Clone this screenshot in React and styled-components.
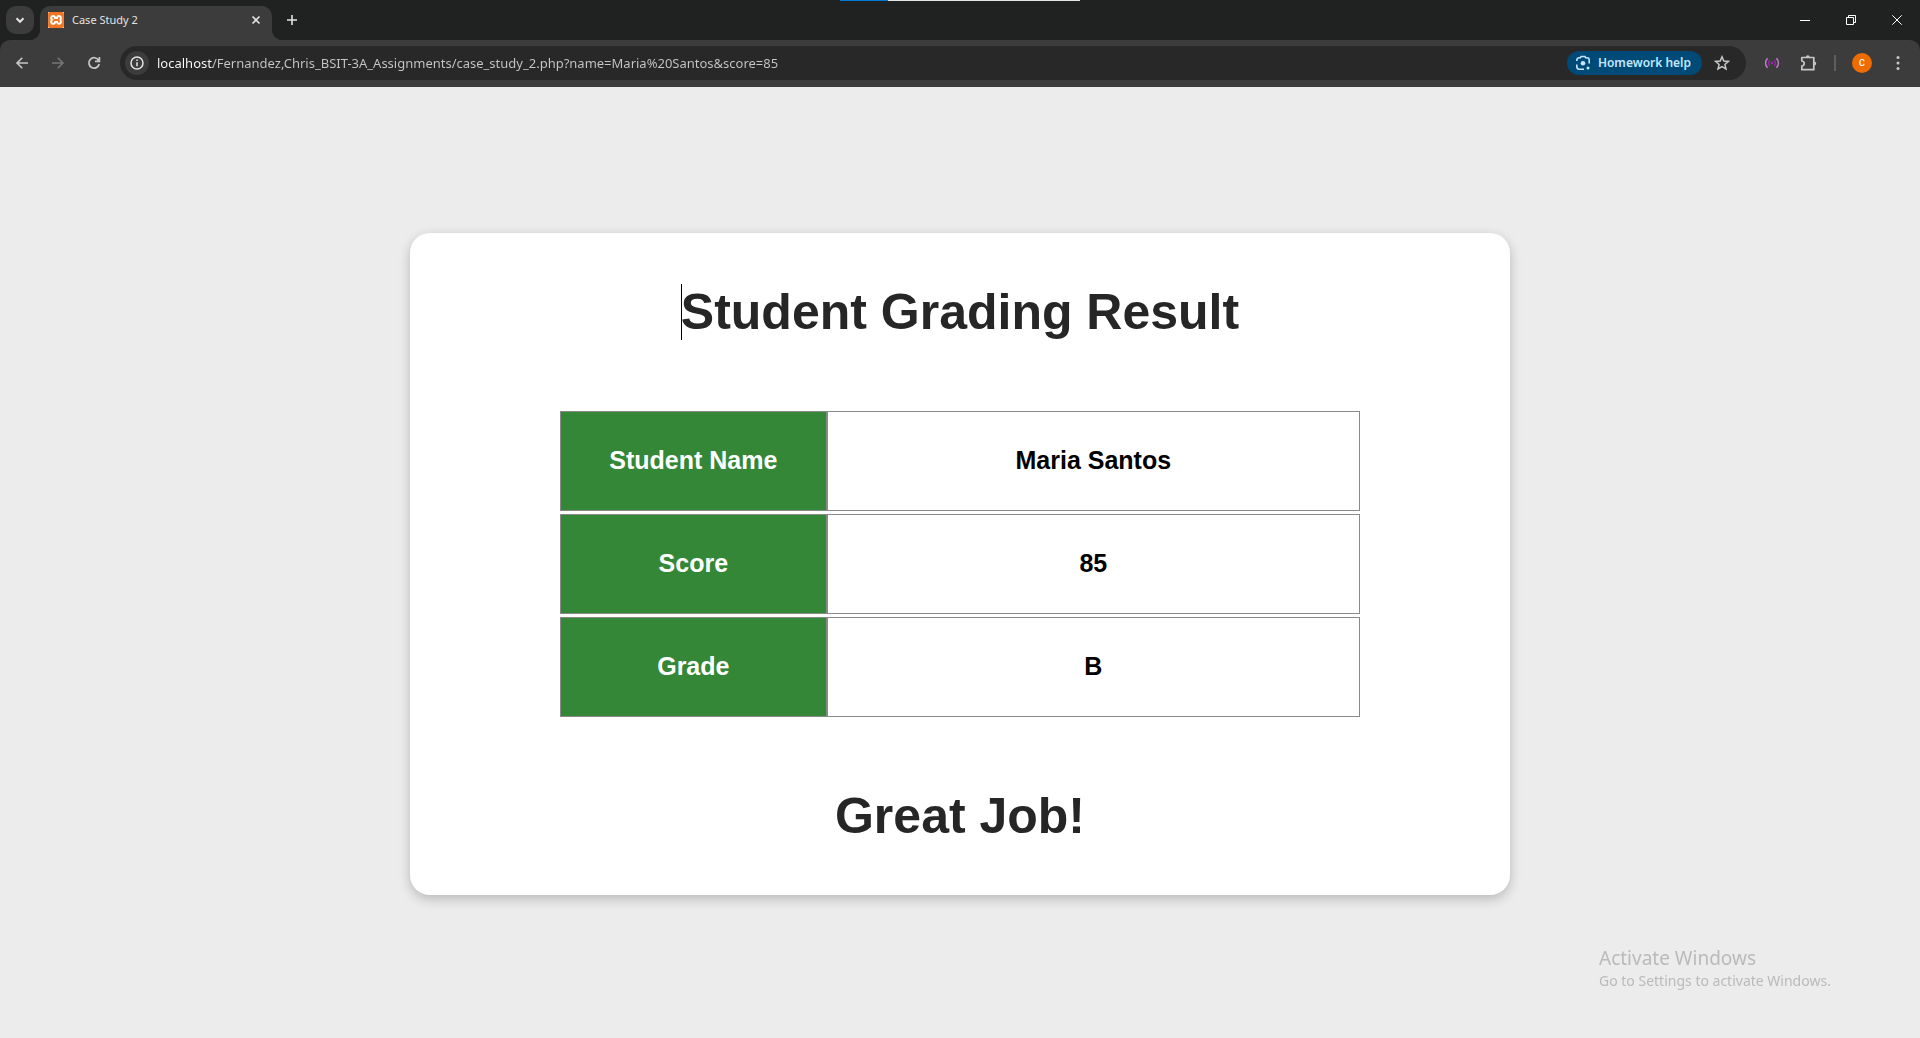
import React from "react";
import styled, { createGlobalStyle, css } from "styled-components";
import { SiXampp } from "react-icons/si";

const color = {
  frame: "#202221",
  toolbar: "#3c3c3c",
  omnibox: "#282828",
  icon: "#c7c7c7",
  page: "#ececec",
  green: "#348736",
  line: "#8a8a8a",
  heading: "#262626",
};

const uiFont = `"Noto Sans", "Segoe UI", sans-serif`;

const GlobalStyle = createGlobalStyle`
  *, *::before, *::after { box-sizing: border-box; }
  body { margin: 0; background: ${color.page}; }
`;

const Screen = styled.div`
  min-height: 100vh;
  display: flex;
  flex-direction: column;
  font-family: "Liberation Sans", Arial, sans-serif;
`;

const Browser = styled.header`
  position: relative;
  background: ${color.frame};
  font-family: ${uiFont};
`;

const LoadingStrip = styled.div`
  position: absolute;
  top: 0;
  left: 50%;
  width: 240px;
  height: 1px;
  margin-left: -120px;
  background: linear-gradient(90deg, #0078d7 20%, #e3e6e4 20%);
`;

const TabStrip = styled.div`
  display: flex;
  height: 40px;
  padding: 6px 0 0 6px;
  gap: 6px;
`;

const plainButton = css`
  display: flex;
  align-items: center;
  justify-content: center;
  padding: 0;
  border: 0;
  background: transparent;
  color: ${color.icon};
  flex: none;
`;

const StripButton = styled.button`
  ${plainButton}
  width: 28px;
  height: 28px;
  border-radius: 10px;
  color: #e3e3e3;
  background: ${(p) => (p.$filled ? color.toolbar : "transparent")};
`;

const Tab = styled.div`
  position: relative;
  display: flex;
  align-items: center;
  gap: 8px;
  flex: 0 1 232px;
  height: 34px;
  padding: 0 8px 6px;
  border-radius: 10px 10px 0 0;
  background: ${color.toolbar};
  color: #e3e3e3;

  &::before,
  &::after {
    content: "";
    position: absolute;
    bottom: 0;
    width: 10px;
    height: 10px;
  }
  &::before {
    right: 100%;
    background: radial-gradient(circle at 0 0, transparent 10px, ${color.toolbar} 10px);
  }
  &::after {
    left: 100%;
    background: radial-gradient(circle at 100% 0, transparent 10px, ${color.toolbar} 10px);
  }
`;

const Favicon = styled.span`
  display: flex;
  background: #fff;
  color: #f37623;
`;

const TabTitle = styled.span`
  flex: 1;
  font-size: 11px;
  line-height: 16px;
  white-space: nowrap;
`;

const TabClose = styled.button`
  ${plainButton}
  width: 16px;
  height: 16px;
  color: #e3e3e3;
`;

const WindowControls = styled.div`
  display: flex;
  margin: -6px 0 0 auto;
`;

const WindowButton = styled.button`
  ${plainButton}
  width: 46px;
  height: 40px;
  color: #fff;
`;

const Toolbar = styled.div`
  display: flex;
  align-items: center;
  gap: 9px;
  height: 47px;
  padding: 0 5px 1px;
  border-radius: 10px 10px 0 0;
  background: ${color.toolbar};
`;

const ToolGroup = styled.div`
  display: flex;
  gap: 2px;
`;

const ToolButton = styled.button`
  ${plainButton}
  width: 34px;
  height: 34px;
  &:disabled { color: #757575; }
`;

const Omnibox = styled.form`
  display: flex;
  align-items: center;
  flex: 1;
  min-width: 0;
  height: 34px;
  padding: 0 7px 0 5px;
  border-radius: 17px;
  background: ${color.omnibox};
`;

const SiteInfo = styled.button`
  ${plainButton}
  width: 24px;
  height: 24px;
  border-radius: 50%;
  background: ${color.toolbar};
  color: #e3e3e3;
`;

const Address = styled.input`
  flex: 1;
  min-width: 0;
  height: 24px;
  margin: 0 8px;
  padding: 0;
  border: 0;
  outline: 0;
  color: ${color.icon};
  background: linear-gradient(90deg, #fff 56px, ${color.icon} 56px);
  background-clip: text;
  -webkit-text-fill-color: transparent;
  caret-color: #fff;
  font: 13px/24px ${uiFont};
`;

const HelpChip = styled.button`
  ${plainButton}
  gap: 7px;
  height: 24px;
  padding: 0 11px 0 8px;
  border-radius: 12px;
  background: #004a77;
  color: #c2e7ff;
  font: 600 12px/24px ${uiFont};
`;

const StarButton = styled.button`
  ${plainButton}
  width: 34px;
  height: 24px;
  margin-left: 3px;
`;

const Separator = styled.span`
  width: 2px;
  height: 16px;
  background: #5e5e5e;
`;

const Avatar = styled.span`
  display: flex;
  align-items: center;
  justify-content: center;
  width: 20px;
  height: 20px;
  border-radius: 50%;
  background: #ef6c00;
  color: #fff;
  font: 500 9px/20px Roboto, sans-serif;
`;

const Page = styled.main`
  flex: 1;
  display: flex;
  justify-content: center;
  align-items: flex-start;
  padding: 146px 24px 48px;
`;

const Card = styled.section`
  display: flex;
  flex-direction: column;
  align-items: center;
  gap: 70px;
  width: 100%;
  max-width: 1100px;
  padding: 50px;
  border-radius: 20px;
  background: #fff;
  box-shadow: 0 4px 12px rgba(0, 0, 0, 0.22);
`;

const Heading = styled.h1`
  position: relative;
  margin: 0;
  color: ${color.heading};
  font-size: 50px;
  line-height: 58px;
  text-align: center;
`;

const TextCursor = styled.span`
  position: absolute;
  left: 0;
  top: 1px;
  bottom: 1px;
  border-left: 1px solid #000;
`;

const Results = styled.table`
  display: block;
  width: 100%;
  max-width: 800px;
  font-size: 25px;
  line-height: 28px;
`;

const ResultRows = styled.tbody`
  display: grid;
  gap: 3px;
`;

const ResultRow = styled.tr`
  display: grid;
  grid-template-columns: 1fr 2fr;
`;

const cell = css`
  padding: 34px 8px 36px;
  border: 1px solid ${color.line};
  font-weight: bold;
  text-align: center;
`;

const ResultLabel = styled.th`
  ${cell}
  background: ${color.green};
  color: #fff;
`;

const ResultValue = styled.td`
  ${cell}
  color: #000;
`;

const Watermark = styled.aside`
  position: fixed;
  right: 0;
  bottom: 47px;
  width: 321px;
  color: #bababa;
  font-family: ${uiFont};
  pointer-events: none;
`;

const WatermarkLine = styled.p`
  margin: 0;
  font-size: ${(p) => (p.$large ? 19 : 14)}px;
  line-height: ${(p) => (p.$large ? 26 : 20)}px;
`;

function Icon({ size, width = 2, children }) {
  return (
    <svg
      width={size}
      height={size}
      viewBox={`0 0 ${size} ${size}`}
      fill="none"
      stroke="currentColor"
      strokeWidth={width}
      aria-hidden="true"
    >
      {children}
    </svg>
  );
}

const results = [
  ["Student Name", "Maria Santos"],
  ["Score", "85"],
  ["Grade", "B"],
];

function BrowserChrome() {
  return (
    <Browser>
      <LoadingStrip />
      <TabStrip>
        <StripButton $filled aria-label="Search tabs">
          <Icon size={10}><path d="M1.5 3.3 5 6.800l3.500-3.500" /></Icon>
        </StripButton>
        <Tab>
          <Favicon><SiXampp size={16} /></Favicon>
          <TabTitle>Case Study 2</TabTitle>
          <TabClose aria-label="Close tab">
            <Icon size={10} width={1.6}><path d="m1.5 1.5 7 7m0-7-7 7" /></Icon>
          </TabClose>
        </Tab>
        <StripButton aria-label="New tab">
          <Icon size={12} width={1.6}><path d="M6 1v10M1 6h10" /></Icon>
        </StripButton>
        <WindowControls>
          <WindowButton aria-label="Minimize">
            <Icon size={10} width={1}><path d="M0 5.5h10" /></Icon>
          </WindowButton>
          <WindowButton aria-label="Restore">
            <Icon size={10} width={1}><path d="M.5 2.5h7v7h-7zM2.5 2.5v-2h7v7h-2" /></Icon>
          </WindowButton>
          <WindowButton aria-label="Close">
            <Icon size={10} width={1}><path d="m.3.3 9.4 9.4m0-9.4L.3 9.7" /></Icon>
          </WindowButton>
        </WindowControls>
      </TabStrip>
      <Toolbar>
        <ToolGroup>
          <ToolButton aria-label="Back">
            <Icon size={14} width={1.6}><path d="M13 7H2m5.3-5.3L2 7l5.3 5.3" /></Icon>
          </ToolButton>
          <ToolButton aria-label="Forward" disabled>
            <Icon size={14} width={1.6}><path d="M1 7h11M6.700 1.700 12 7l-5.300 5.300" /></Icon>
          </ToolButton>
          <ToolButton aria-label="Reload">
            <Icon size={14} width={1.7}><path d="M11.600 4.300A5.200 5.200 0 1 0 12.200 8M12.400 1v4.400H8" /></Icon>
          </ToolButton>
        </ToolGroup>
        <Omnibox>
          <SiteInfo type="button" aria-label="View site information">
            <Icon size={14} width={1.5}>
              <circle cx="7" cy="7" r="6" />
              <path d="M7 6.300v4M7 3.600v1.500" />
            </Icon>
          </SiteInfo>
          <Address
            aria-label="Address"
            spellCheck="false"
            defaultValue="localhost/Fernandez,Chris_BSIT-3A_Assignments/case_study_2.php?name=Maria%20Santos&score=85"
          />
          <HelpChip type="button">
            <Icon size={16} width={1.6}>
              <path d="M1.800 6V5a2.200 2.200 0 0 1 2.200-2.200h1.300l.9-1.300h3.600l.9 1.300H12A2.200 2.200 0 0 1 14.200 5v3.500M1.800 9.500v2A2.700 2.700 0 0 0 4.500 14.200H9" />
              <circle cx="8" cy="8.300" r="2.300" fill="currentColor" stroke="none" />
              <circle cx="13" cy="13" r="1.500" fill="currentColor" stroke="none" />
            </Icon>
            Homework help
          </HelpChip>
          <StarButton type="button" aria-label="Bookmark this tab">
            <Icon size={16} width={1.5}>
              <path d="m8 1.800 1.800 4.200 4.600.4-3.500 3 1.100 4.500L8 11.500l-4 2.400 1.100-4.500-3.500-3 4.600-.4z" />
            </Icon>
          </StarButton>
        </Omnibox>
        <ToolGroup>
          <ToolButton aria-label="Live extension">
            <Icon size={16} width={1.4}>
              <g stroke="#c77fd0"><path d="M3.600 3.200a6.600 6.600 0 0 0 0 9.600M12.400 3.200a6.600 6.600 0 0 1 0 9.600" /></g>
              <g stroke="#9c27b0"><path d="M5.800 5.200a4 4 0 0 0 0 5.600M10.200 5.200a4 4 0 0 1 0 5.600" /></g>
              <circle cx="8" cy="8" r="1.300" fill="#9c27b0" stroke="none" />
            </Icon>
          </ToolButton>
          <ToolButton aria-label="Extensions">
            <Icon size={18} width={1.7}>
              <path d="M2.800 3.500H14.800V15.700H2.800V12.200C6 11.700 6 7.500 2.800 7z" strokeLinejoin="round" />
              <path d="M6.800 3.200a2 2 0 0 1 4 0zM15.200 7.600a2 2 0 0 1 0 4z" fill="currentColor" stroke="none" />
            </Icon>
          </ToolButton>
        </ToolGroup>
        <Separator />
        <ToolGroup>
          <ToolButton aria-label="Profile"><Avatar>C</Avatar></ToolButton>
          <ToolButton aria-label="Menu">
            <Icon size={16}>
              <g fill="currentColor" stroke="none">
                <circle cx="8" cy="2.500" r="1.500" />
                <circle cx="8" cy="8" r="1.500" />
                <circle cx="8" cy="13.500" r="1.500" />
              </g>
            </Icon>
          </ToolButton>
        </ToolGroup>
      </Toolbar>
    </Browser>
  );
}

export default function App() {
  return (
    <Screen>
      <GlobalStyle />
      <BrowserChrome />
      <Page>
        <Card>
          <Heading>
            <TextCursor />
            Student Grading Result
          </Heading>
          <Results>
            <ResultRows>
              {results.map(([label, value]) => (
                <ResultRow key={label}>
                  <ResultLabel scope="row">{label}</ResultLabel>
                  <ResultValue>{value}</ResultValue>
                </ResultRow>
              ))}
            </ResultRows>
          </Results>
          <Heading as="h2">Great Job!</Heading>
        </Card>
      </Page>
      <Watermark>
        <WatermarkLine $large>Activate Windows</WatermarkLine>
        <WatermarkLine>Go to Settings to activate Windows.</WatermarkLine>
      </Watermark>
    </Screen>
  );
}
